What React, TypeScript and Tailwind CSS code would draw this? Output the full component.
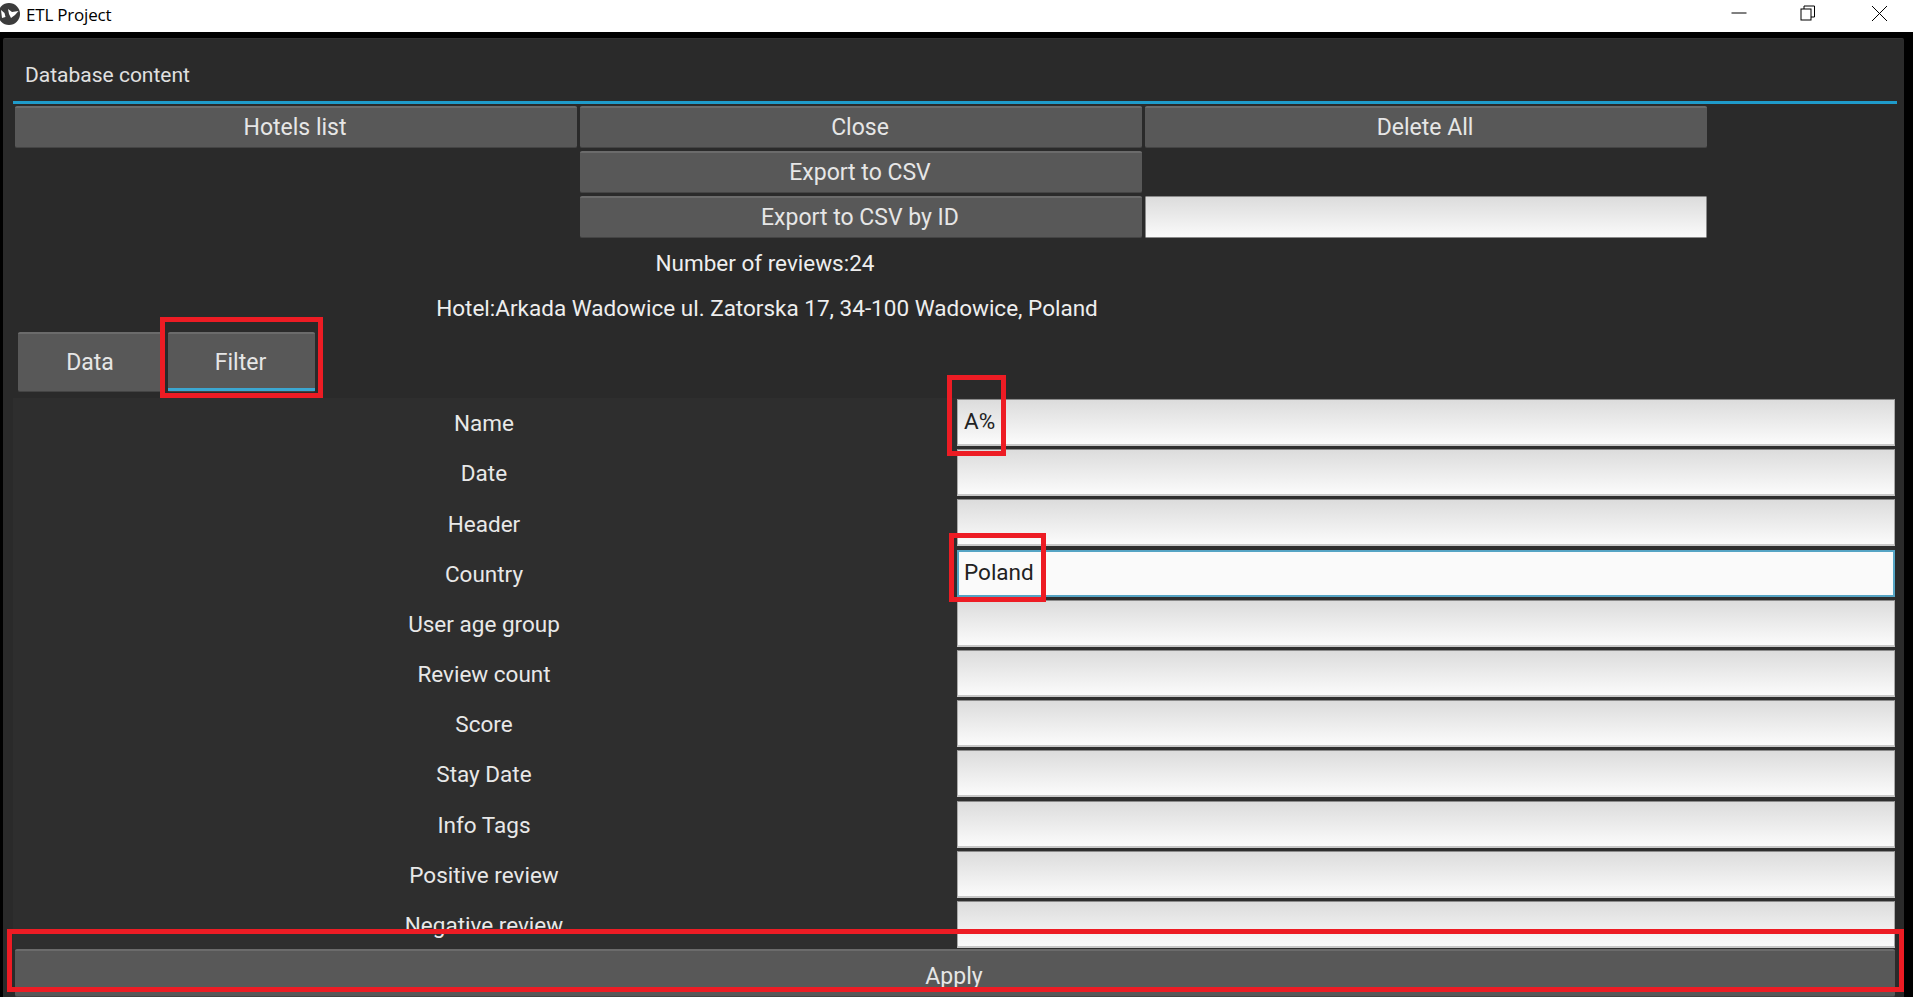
import React from "react";

const Btn = ({ children, className = "" }: { children?: React.ReactNode; className?: string }) => (
  <div className={"flex items-center justify-center rounded-[2px] bg-[#585858] border-t-2 border-t-[#6b6b6b] border-b border-b-[#444] pr-[2px] text-[23px] text-[#e6e6e6] " + className}>{children}</div>
);

const fields: [string, string, boolean][] = [
  ["Name", "A%", false],
  ["Date", "", false],
  ["Header", "", false],
  ["Country", "Poland", true],
  ["User age group", "", false],
  ["Review count", "", false],
  ["Score", "", false],
  ["Stay Date", "", false],
  ["Info Tags", "", false],
  ["Positive review", "", false],
  ["Negative review", "", false],
];

export default function App() {
  return (
    <div className="relative flex h-[997px] w-[1913px] flex-col overflow-hidden bg-black text-[22.5px]" style={{ fontFamily: "Roboto, sans-serif" }}>
      <div className="flex h-8 shrink-0 items-center bg-white pl-0 text-black">
        <svg width="20" height="22" viewBox="0 0 20 22" className="mb-1 shrink-0">
          <circle cx="9" cy="11" r="11" fill="#3c3c3c" />
          <path d="M1 7 L4.5 10 L5.5 14 L2 15 Z" fill="#fff" />
          <path d="M8 6 L12 9 L18.5 8 L15 12 L11 15 L9 11 Z" fill="#fff" />
        </svg>
        <span className="ml-[6px] mb-0.5 text-[17px] tracking-[-0.2px]" style={{ fontFamily: "'Open Sans', sans-serif" }}>ETL Project</span>
        <div className="ml-auto flex items-center pr-[25px]">
          <svg width="16" height="16" viewBox="0 0 16 16" className="mr-[53px] mb-1.5"><path d="M0.5 8H15.5" stroke="#000" strokeWidth="1" /></svg>
          <svg width="16" height="16" viewBox="0 0 16 16" className="mr-[55px] mb-1.5" fill="none" stroke="#000"><rect x="1" y="4" width="10" height="11" /><path d="M4 4V1H14.5V12H11" /></svg>
          <svg width="17" height="17" viewBox="0 0 17 17" className="mb-1.5" stroke="#000"><path d="M1 1L16 16M16 1L1 16" /></svg>
        </div>
      </div>

      <div className="ml-[3px] mt-[6px] flex w-[1901px] min-h-0 flex-1 flex-col rounded-t-[2px] border-t border-t-[#333] bg-[#2a2a2a]">
        <div className="flex h-[62px] shrink-0 items-center pl-[22px] pt-3 text-[21px] text-[#e0e0e0]">Database content</div>
        <div className="ml-[10px] h-[3px] w-[1884px] shrink-0 bg-[#1f9bca]" />
        <div className="ml-3 mt-0.5 grid w-[1695px] shrink-0 grid-cols-[562px_562px_562px] auto-rows-[45px] gap-x-[3px]">
          <Btn className="mb-[3px] pt-[2px]">Hotels list</Btn>
          <Btn className="mb-[3px] pt-[2px]">Close</Btn>
          <Btn className="mb-[3px] pt-[2px]">Delete All</Btn>
          <div />
          <Btn className="mb-[3px] pt-[2px]">Export to CSV</Btn>
          <div />
          <div />
          <Btn className="mb-[3px] pt-[2px]">Export to CSV by ID</Btn>
          <div className="mb-[3px] rounded-[1px] border border-[#8a8a8a] bg-gradient-to-b from-[#dcdcdc] to-[#fafafa]" />
        </div>
        <div className="ml-3 flex h-[45px] w-[1500px] shrink-0 items-center justify-center text-[#eeeeee]">Number of reviews:24</div>
        <div className="ml-3 flex h-[45px] w-[1504px] shrink-0 items-center justify-center text-[#eeeeee]">Hotel:Arkada Wadowice ul. Zatorska 17, 34-100 Wadowice, Poland</div>
        <div className="ml-[15px] mt-px flex h-[60px] shrink-0 gap-[4px]">
          <Btn className="w-[146px] pt-[2px]">Data</Btn>
          <Btn className="relative w-[147px] pt-[2px]">Filter<div className="absolute inset-x-0 bottom-0 h-[3px] bg-[#3ba7d1]" /></Btn>
        </div>
        <div className="ml-[10px] mr-[9px] mt-[6px] min-h-0 flex-1 overflow-hidden bg-[#2e2e2e] pt-px">
          {fields.map(([label, value, focus]) => (
            <div key={label} className="flex h-[50.2px] items-start">
              <div className="flex h-[47px] w-[944px] shrink-0 items-center justify-center pr-[2px] pt-[3px] text-[#e8e8e8]">{label}</div>
              <div className={"flex h-[47px] flex-1 items-center text-[#222] " + (focus ? "border-2 border-[#55a4c4] bg-[#fafafa] pl-[5px]" : "border-x border-x-[#a9a9a9] border-b-2 border-b-[#c8c8c8] border-t border-t-[#8a8a8a] bg-gradient-to-b from-[#dcdcdc] to-[#fbfbfb] pl-[6px]")}>{value}</div>
            </div>
          ))}
        </div>
        <Btn className="ml-3 mr-[9px] h-[48px] shrink-0 pt-[7px]">Apply</Btn>
      </div>

      <div className="absolute left-[160px] top-[317px] h-[81px] w-[163px] border-[5px] border-[#ed1c24]" />
      <div className="absolute left-[947px] top-[375px] h-[81px] w-[59px] border-[5px] border-[#ed1c24]" />
      <div className="absolute left-[949px] top-[533px] h-[69px] w-[97px] border-[5px] border-[#ed1c24]" />
      <div className="absolute left-[7px] top-[929px] h-[63px] w-[1897px] border-[5px] border-[#ed1c24]" />
    </div>
  );
}
